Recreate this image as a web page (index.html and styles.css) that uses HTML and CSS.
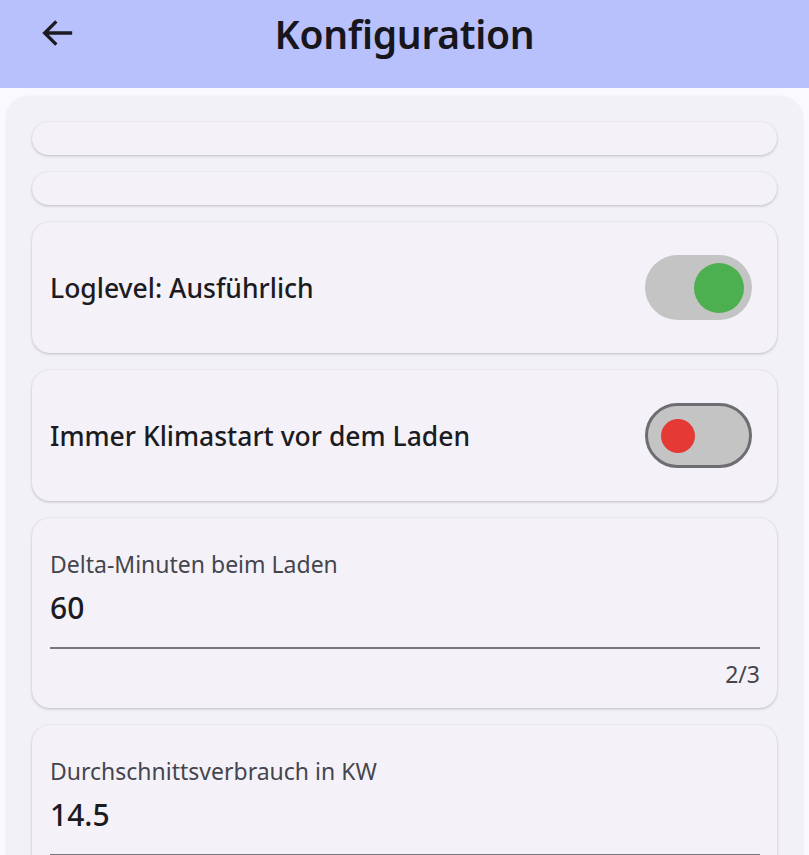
FILE: index.html
```html
<!DOCTYPE html>
<html lang="de">
<head>
<meta charset="utf-8">
<title>Konfiguration</title>
<link rel="stylesheet" href="styles.css">
</head>
<body>
<header class="appbar">
  <button class="back" aria-label="Zurück">
    <svg width="40" height="40" viewBox="0 0 24 24"><path d="M20.5 12H4.5M11 5l-7 7 7 7" fill="none" stroke="#1b1b21" stroke-width="2"/></svg>
  </button>
  <h1 class="title">Konfiguration</h1>
</header>
<main class="content">
  <section class="panel">
    <div class="card card-empty"></div>
    <div class="card card-empty"></div>
    <div class="card card-row">
      <span class="row-label">Loglevel: Ausführlich</span>
      <span class="switch switch-on"><span class="thumb"></span></span>
    </div>
    <div class="card card-row">
      <span class="row-label">Immer Klimastart vor dem Laden</span>
      <span class="switch switch-off"><span class="thumb"></span></span>
    </div>
    <div class="card card-field">
      <label class="field-label">Delta-Minuten beim Laden</label>
      <div class="field-value">60</div>
      <div class="field-line"></div>
      <div class="field-counter">2/3</div>
    </div>
    <div class="card card-field">
      <label class="field-label">Durchschnittsverbrauch in KW</label>
      <div class="field-value">14.5</div>
      <div class="field-line"></div>
    </div>
  </section>
</main>
</body>
</html>
```
FILE: styles.css
```css
* { box-sizing: border-box; }
html, body { margin: 0; padding: 0; }
body {
  width: 809px;
  height: 855px;
  overflow: hidden;
  background: #faf9fd;
  font-family: "Noto Sans", "Open Sans", sans-serif;
  color: #1b1b21;
}
.appbar {
  height: 88px;
  background: #b9c1fd;
  display: flex;
  align-items: center;
  padding-bottom: 22px;
}
.back {
  border: 0;
  background: none;
  padding: 0;
  margin-left: 37px;
  width: 42px;
  height: 42px;
  display: flex;
  align-items: center;
  justify-content: center;
}
.title {
  margin: 0 79px 0 0;
  flex: 1;
  text-align: center;
  font-size: 39px;
  font-weight: 600;
  letter-spacing: -0.3px;
  color: #16161c;
}
.content {
  padding: 8px 7px 0 7px;
}
.panel {
  background: #f3f1f8;
  border-radius: 22px;
  box-shadow: 0 1px 3px rgba(0,0,0,0.12);
  padding: 26px 25px 40px 25px;
  display: flex;
  flex-direction: column;
  gap: 17px;
}
.card {
  background: #f4f2f8;
  border-radius: 18px;
  box-shadow: 0 1px 3px rgba(0,0,0,0.22), 0 0 1px rgba(0,0,0,0.05);
}
.card-empty {
  height: 33px;
}
.card-row {
  height: 131px;
  display: flex;
  align-items: center;
  justify-content: space-between;
  padding: 0 25px 0 18px;
}
.row-label {
  font-size: 26.5px;
  font-weight: 500;
  color: #1b1b21;
}
.switch {
  width: 107px;
  height: 65px;
  border-radius: 33px;
  background: #c4c4c4;
  display: flex;
  align-items: center;
}
.switch-on {
  justify-content: flex-end;
  padding-right: 8px;
}
.switch-on .thumb {
  width: 50px;
  height: 50px;
  background: #4caf50;
  border-radius: 50%;
}
.switch-off {
  border: 3px solid #6e6e72;
  padding-left: 13px;
}
.switch-off .thumb {
  width: 34px;
  height: 34px;
  background: #e53935;
  border-radius: 50%;
}
.card-field {
  padding: 32px 17px 20px 18px;
  display: flex;
  flex-direction: column;
}
.field-label {
  font-size: 23px;
  color: #45454d;
  line-height: 28px;
}
.field-value {
  font-size: 30px;
  font-weight: 500;
  line-height: 36px;
  margin-top: 12px;
  color: #1b1b21;
}
.field-line {
  height: 2px;
  background: #76767c;
  margin-top: 21px;
}
.field-counter {
  align-self: flex-end;
  font-size: 23px;
  color: #45454d;
  line-height: 28px;
  margin-top: 11px;
}
```
